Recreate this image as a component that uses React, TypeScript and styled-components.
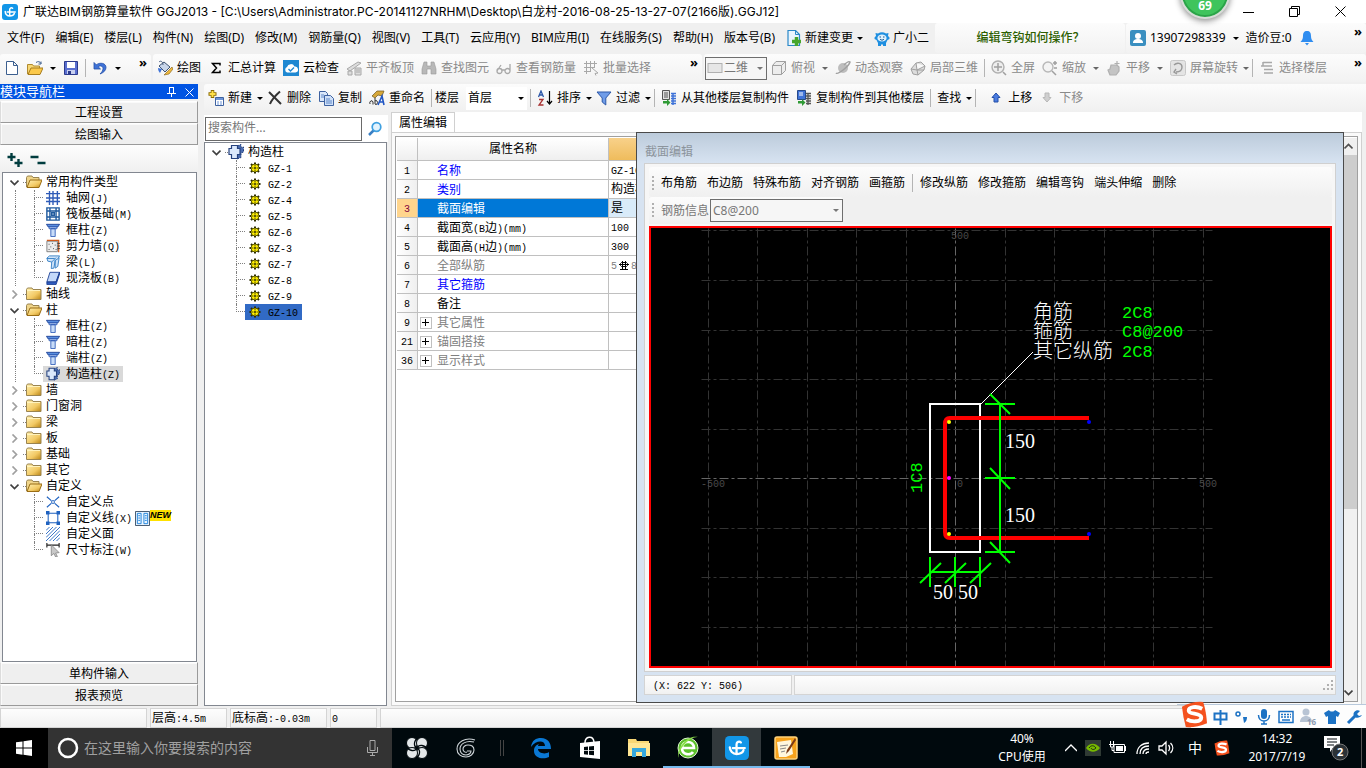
import React from 'react';
import styled, { createGlobalStyle, css } from 'styled-components';

const UI_FONT = `"Noto Sans", "Noto Sans CJK SC", sans-serif`;

const GlobalStyle = createGlobalStyle`
  *, *::before, *::after { box-sizing: border-box; }
  body { margin: 0; background: #f0f0f0; color: #000; font: 12px/16px ${UI_FONT}; }
  button, input, select { font: inherit; color: inherit; border-radius: 0; }
  button { border: 0; padding: 0; margin: 0; background: none; white-space: nowrap; }
  ul { list-style: none; margin: 0; padding: 0; }
  svg { display: block; flex: none; }
`;

/* ---------- icons ---------- */

const art: Record<string, React.ReactNode> = {
  app: (
    <>
      <rect width="16" height="16" rx="3" fill="#1296e8" />
      <path d="M10.600 4.300A1.700 1.700 0 0 0 7.700 5.500V12M5.200 8h8M3.200 7.500A4.500 4.500 0 0 0 7.700 12Q11.500 12 12.300 9.600" fill="none" stroke="#fff" strokeWidth="1.500" strokeLinecap="round" />
    </>
  ),
  file: <path d="M2.500 1.500h7l4 4v9h-11zM9.500 1.500v4h4" fill="#fff" stroke="#3c5f8f" />,
  folderOpenBar: (
    <>
      <path d="M.5 14V4.500h5l1 1.500h6v2" fill="#f7d774" stroke="#b08a2e" />
      <path d="M1 14.500 4 8h12l-3 6.500z" fill="#fbc94b" stroke="#a67c1e" />
      <path d="M9 2.500c2-1.500 4-1 5 1m0-2v2.500h-2.500" fill="none" stroke="#3c5f8f" />
    </>
  ),
  save: (
    <>
      <path d="M1.500 1.500h13v13h-13z" fill="#5a6fd0" stroke="#2c3a8c" />
      <path d="M4 2h8v6H4z" fill="#fff" />
      <path d="M4 10h8v4H4z" fill="#c8d0f0" />
      <path d="M5 11h3v3H5z" fill="#2c3a8c" />
    </>
  ),
  undo: <path d="M2 2.500v6.500h6.500L6.200 6.800C8 5 11 6 11 8.500c0 2-1 3.500-3 5.500 4-1.500 6-4 6-6.500C14 3 8 2 4.300 4.800z" fill="#3f73d8" stroke="#2450a8" strokeWidth=".8" />,
  paint: (
    <>
      <path d="m2 6 5-4 6 5-5 5z" fill="#c9d6ea" stroke="#3f5472" />
      <path d="M2 2c2-2 4 0 4 3" fill="none" stroke="#4a5f80" />
      <path d="M1 8c0 2 1 4 2 5l2-4z" fill="#3f73d8" />
      <path d="m15 7-5 5-3 3 5-1 4-5z" fill="#efb93d" stroke="#7d5a12" strokeWidth=".6" />
    </>
  ),
  sigma: <path d="M12 5.500V3.500H4.500l4 4.500-4 4.500H12v-2" fill="none" stroke="#000" strokeWidth="1.500" />,
  cloud: (
    <>
      <rect width="16" height="16" fill="#1e88d2" />
      <path d="M4 12.500a3 3 0 0 1 0-5.500 4 4 0 0 1 7.500-.5 3 3 0 0 1 1 6z" fill="#fff" />
      <path d="m5.500 9 2 2 3.500-3.500" fill="none" stroke="#1e88d2" strokeWidth="1.400" />
    </>
  ),
  align: <path d="M1 9 12 2l3 1L4 11zM2 11h4v4H2zM9 8h6v7H9zM10 10h4M10 12h4" fill="#ddd" stroke="#a8a8a8" />,
  binoc: <path d="M3 2h3v4h4V2h3l2 7v5h-5V9H6v5H1V9z" fill="#b8b8b8" stroke="#999" strokeWidth=".6" />,
  glasses: <path d="M1 11a2.500 2.500 0 1 0 5 0 2.500 2.500 0 1 0-5 0m0 0 4-6m4 6a2.500 2.500 0 1 0 5 0 2.500 2.500 0 1 0-5 0M6 10h3m5 1V4" fill="none" stroke="#a8a8a8" strokeWidth="1.300" />,
  batch: <path d="M1 3.500h13M1 7.500h10M1 11.500h7M3.500 1v13M7.500 1v11M11.500 1v7M9 8l6 5-3 .5 1 2" fill="none" stroke="#a8a8a8" />,
  plane2d: <rect x="1" y="3.500" width="14" height="9" fill="#e6e6e6" stroke="#b0b0b0" />,
  cube: <path d="M1.500 5.500 5 1.500h9.500v9l-4 4h-9zM1.500 5.500h9v9M10.500 5.500l4-4" fill="#ededed" stroke="#a0a0a0" />,
  orbit: (
    <>
      <circle cx="8" cy="8" r="5" fill="#bdbdbd" />
      <path d="M1 13C3 15 14 6 15 2c-1-1-4 1-6 3" fill="none" stroke="#a0a0a0" strokeWidth="1.500" />
    </>
  ),
  local3d: <path d="m1 9 5-6 5-1 4 4-1 4-6 5-5-1zM1 9l6 1 7 0M7 10l1 5M6 3l1 7 8-4" fill="#ddd" stroke="#a0a0a0" />,
  full: (
    <>
      <circle cx="7" cy="7" r="6" fill="#eee" stroke="#b0b0b0" strokeWidth="1.400" />
      <path d="M7 3v8M3 7h8M12 12l3 3" stroke="#a0a0a0" strokeWidth="1.500" />
    </>
  ),
  zoom: (
    <>
      <circle cx="6" cy="7" r="5" fill="#f4f4f4" stroke="#b8b8b8" strokeWidth="1.400" />
      <path d="m10 11 4 4M11 3h4M13 1v4M12 8h3" stroke="#a0a0a0" strokeWidth="1.500" />
    </>
  ),
  pan: <path d="M4 15 2 10l2-1 1-4h6l2 2v4l-3 4zM11 1v5M8.500 3.500h5" fill="#c4c4c4" stroke="#b0b0b0" strokeWidth="1.200" />,
  rotate: (
    <>
      <rect x=".5" y=".5" width="15" height="15" rx="2" fill="#e4e4e4" stroke="#c8c8c8" />
      <path d="M4 5c3-3 8-2 8 2s-3 5-6 5m0-3-2 3 3 2" fill="none" stroke="#999" strokeWidth="1.400" />
    </>
  ),
  floors: <path d="M4 2.500h9M2 6h11M5 9.500h9M5 13h9M4 2v4" fill="none" stroke="#a8a8a8" strokeWidth="1.500" />,
  create: (
    <>
      <path d="M4.500 0v8M.5 4h8" stroke="#8a6a00" strokeWidth="3.500" />
      <path d="M4.500 1v6M1.500 4h6" stroke="#ffe04a" strokeWidth="2" />
      <path d="M7.500 7.500h8v8h-8z" fill="#fff" stroke="#3f62a0" />
      <path d="M8 8h7v2H8z" fill="#6d95d8" />
      <path d="M9 12h2m1 0h2m-5 2h2m1 0h2" stroke="#6d95d8" />
    </>
  ),
  cross: <path d="m2 2 12 12M13 1.500C9 5 5 9 3 14" fill="none" stroke="#333" strokeWidth="2" />,
  copy: (
    <>
      <path d="M1.500 1.500h6l2 2v8h-8z" fill="#dbe8fa" stroke="#3f62a0" />
      <path d="M6.500 5.500h6l3 3v7h-9z" fill="#cfe0f8" stroke="#3f62a0" />
      <path d="M3 5h3M3 7h3M8 9h4M8 11h6M8 13h6" stroke="#5f88c8" />
    </>
  ),
  rename: (
    <>
      <path d="m3 6 5-5h7l-2 5-4-1-3 3z" fill="#d7a83a" stroke="#6a5420" strokeWidth=".7" />
      <path d="M1 14a1.500 2 0 1 1 3-2v2.500M6 8v6a1.500 2 0 1 0 0-3" fill="none" stroke="#333" />
      <path d="m9 15 4-9 2 9M10.500 12H14" fill="none" stroke="#2257c4" strokeWidth="1.600" />
    </>
  ),
  sort: (
    <>
      <path d="m1.500 7 2.500-6 2.500 6M2.500 5h3" fill="none" stroke="#2b57a8" strokeWidth="1.300" />
      <path d="M2 9.500h4L2 15h4.500" fill="none" stroke="#a83232" strokeWidth="1.300" />
      <path d="M12.500 1v13M10 11l2.500 3 2.500-3" fill="none" stroke="#000" strokeWidth="1.200" />
    </>
  ),
  filter: <path d="M1 2h14L9.800 8v7L6.200 12V8z" fill="#6f9ce8" stroke="#2b57a8" />,
  fromFloor: (
    <>
      <path d="M1.500.5h7v9h-7z" fill="#e0e0e0" stroke="#555" />
      <path d="M3 3h4M3 5h4M3 7h4" stroke="#555" />
      <path d="M12 3v12M10 3.500h5M10 6h5M10 8.500h5M10 11h5M10 13.500h5" stroke="#3f73d8" strokeWidth="1.500" />
      <path d="M2 11h4V9l3.500 3.500L6 16v-2.500H2z" fill="#2f9a35" />
    </>
  ),
  toFloor: (
    <>
      <path d="M1.500.5h8v9h-8z" fill="#3f73d8" stroke="#27498a" />
      <path d="M3 3h4M3 5h4" stroke="#fff" />
      <path d="M12 3v12M10 3.500h5M10 6h5M10 8.500h5M10 11h5M10 13.500h5" stroke="#555" strokeWidth="1.300" />
      <path d="M2 11h4V9l3.500 3.500L6 16v-2.500H2z" fill="#2f9a35" />
    </>
  ),
  up: <path d="m8 3 4 4.500H10V12H6V7.500H4z" fill="#4a7be0" stroke="#2450a8" />,
  down: <path d="m8 12 4-4.500H10V3H6v4.500H4z" fill="#cfcfcf" stroke="#b8b8b8" />,
  change: (
    <>
      <path d="M2 .5h7.500l4 4v11H2z" fill="#e8f4fd" stroke="#2a88c8" strokeWidth="1.200" />
      <path d="M9.500.5v4h4" fill="none" stroke="#2a88c8" />
      <path d="M10.500 7v9M6 11.500h9" stroke="#46a62c" strokeWidth="3.500" />
    </>
  ),
  robot: (
    <>
      <path d="M1.500 3 4 3.500a8 8 0 0 1 8 0L14.500 3 14 6q2 1 1.500 3l-2 1-1.500 3v3H9v-1.500H7V16H4v-3L2.500 10l-2-1Q0 7 2 6z" fill="#1f8fe0" />
      <ellipse cx="8" cy="8" rx="4.600" ry="3.600" fill="#dff0fc" />
      <path d="M5.500 7h1.500M9 7h1.500M6 9c1 1.500 3 1.500 4 0" stroke="#125a96" fill="none" />
    </>
  ),
  user: (
    <>
      <rect width="16" height="16" rx="2" fill="#3a8fc0" />
      <circle cx="8" cy="6" r="3" fill="#fff" />
      <path d="M3 13c0-3 2-4 5-4s5 1 5 4z" fill="#fff" />
    </>
  ),
  bell: <path d="M8 1c3 0 4 2 4 5 0 3 1 4 2.500 6h-13C3 10 4 9 4 6c0-3 1-5 4-5M6 13h4l-2 2.500z" fill="#2f8df0" />,
  lens: (
    <>
      <path d="m2 14 5-5" stroke="#3a7fc4" strokeWidth="2.500" />
      <circle cx="9.500" cy="6" r="4.300" fill="#e3f3fd" stroke="#3fa0e0" strokeWidth="1.700" />
    </>
  ),
  expandAll: <path d="M4.500 1v8M.5 5h8M11.500 7v8M7.500 11h8" stroke="#003c3e" strokeWidth="2.400" />,
  collapseAll: <path d="M.5 5h8M7.500 11h8" stroke="#003c3e" strokeWidth="2.400" />,
  folder: (
    <>
      <path d="M.5 3.500 1.500 2h4.500l1 1.500h8v10H.5z" fill="url(#gold)" stroke="#9a8450" />
      <path d="M1 4.500h13" stroke="#fff3bd" />
    </>
  ),
  folderOpen: (
    <>
      <path d="M.5 13V3.500L1.500 2H6l1 1.500h6V6" fill="#f0d58a" stroke="#9a8450" />
      <path d="M1 13.500 4 6h12l-3 7.500z" fill="url(#gold)" stroke="#9a6d14" />
    </>
  ),
  grid: <path d="M4 0v16M8 0v16M13 0v16M0 3h16M0 8h16M0 12h16" stroke="#2f5cb8" strokeWidth="1.600" />,
  raft: <path d="M1 1h14v14H1zM4.500 1v14M11.500 1v14M1 4.500h14M1 11.500h14M6.500 6.500h3v3h-3z" fill="#fff" stroke="#1f5a9e" strokeWidth="1.600" />,
  column: (
    <>
      <path d="M.5 1.500h15l-2 3h-11z" fill="#5a8fe0" stroke="#1c3f94" />
      <path d="M3.500 4.500h9v2h-9zM5.500 6.500h5v9h-5z" fill="#c8dcf8" stroke="#2f5cb8" />
    </>
  ),
  wall: (
    <>
      <path d="M1 2.500h12v12H1z" fill="#ececec" stroke="#777" />
      <path d="M1 1.500h13.500V15" fill="none" stroke="#d05a1c" strokeWidth="1.400" />
      <path d="M3 6h1M7 5h1M10 7h1M5 9h1M8 11h1M3 12h1M11 12h1M13 5h3M13 8h3M13 11h3" stroke="#333" />
    </>
  ),
  beam: <path d="M1 3.500 4 1h11.500l-2 3.500-3 1.500L9 15 6 15.500 6.500 8 2 7zM6.500 8l5-5M10.500 6v9l3-2 1.500-10M1 4h9" fill="#cfe3f8" stroke="#2f7cc4" />,
  slab: (
    <>
      <path d="M1 12.500 4.500 1.500h11l-4 11z" fill="#c4d9fa" stroke="#1c3f94" />
      <path d="M1 12.500v3h10.500l4-12v-2l-4 11z" fill="#2f5cc0" stroke="#1c3f94" />
    </>
  ),
  gear: (
    <>
      <path d="M9 2l4-1.500v3L15.500 3v5L13 9v4.500L9 15z" fill="#4a6cb0" stroke="#26427e" strokeDasharray="2 1" />
      <path d="M3.500 1.500h6v3h2.500v6H9.500v4h-6v-4H1v-6h2.500z" fill="#dbe8fb" stroke="#26427e" strokeWidth="1.200" />
    </>
  ),
  point: (
    <>
      <path d="m1 2 5 4.500M15 2l-5 4.500M1 14l5-4.500M15 14l-5-4.500" stroke="#1f62c0" strokeWidth="1.300" />
      <path d="M6.500 6.500h3v3h-3z" fill="#fff" stroke="#1f62c0" />
    </>
  ),
  line: (
    <>
      <path d="M2.500 2.500h11v11h-11z" fill="#fff" stroke="#1f62c0" strokeWidth="1.200" />
      <path d="M0 0h4v4H0zM12 0h4v4h-4zM0 12h4v4H0zM12 12h4v4h-4z" fill="#1f62c0" />
    </>
  ),
  hatch: <path d="M0 4 4 0M0 8l8-8M0 12 12 0M0 16 16 0M4 16 16 4M8 16l8-8M12 16l4-4" stroke="#1f62c0" />,
  dims: (
    <>
      <path d="M1 0v5M15 0v5M1 2.500h14" stroke="#222" strokeWidth="1.300" />
      <path d="m6 2 9 9-4 .5 2 4-2 .5-2-4-3 2.500z" fill="#c8c8c8" stroke="#777" strokeWidth=".8" />
    </>
  ),
  book: (
    <>
      <path d="M.5.5h15v15H.5z" fill="#eaf5ff" stroke="#3a4f68" />
      <path d="M2.500 2.500h4v11h-4zM9.500 2.500h4v11h-4zM3.500 5h2M3.500 7.500h2M3.500 10h2M10.500 5h2M10.500 7.500h2M10.500 10h2" fill="none" stroke="#1f83dc" />
    </>
  ),
  cog: (
    <>
      <path d="M6 .5v11M.5 6h11M2 2l8 8M10 2l-8 8" stroke="#2a2a00" strokeWidth="2" />
      <circle cx="6" cy="6" r="4" fill="#ffee00" stroke="#3a3a00" strokeWidth=".8" />
      <path d="M6 3v1.500M6 7.500V9M3 6h1.500M7.500 6H9M5.500 5.500h1v1h-1z" stroke="#3a3a00" strokeWidth=".9" />
    </>
  ),
};

type IconProps = { name: string; size?: number };
const Icon = ({ name, size = 16 }: IconProps) => (
  <svg width={size} height={size} viewBox={name === 'cog' ? '0 0 12 12' : '0 0 16 16'} aria-hidden="true">
    {art[name]}
  </svg>
);

const Half = styled.span`
  font-family: "Liberation Mono", monospace;
  font-size: 10px;
  line-height: 10px;
`;

/* Full-width characters take 12px each, ASCII runs 6px each. */
const Song = ({ children }: { children: string }) => (
  <span>
    {children.split(/([\x20-\x7e]+)/).map((part, i) => (i % 2 ? <Half key={i}>{part}</Half> : part))}
  </span>
);

const Caret = styled.span<{ $w?: number; $dim?: boolean }>`
  flex: none;
  display: flex;
  justify-content: center;
  width: ${(p) => p.$w ?? 12}px;
  color: ${(p) => (p.$dim ? '#666' : 'inherit')};
  &::after {
    content: '';
    border: 3px solid transparent;
    border-top-color: currentColor;
    border-bottom: 0;
  }
`;

/* ---------- title bar and menus ---------- */

const Page = styled.div`
  position: relative;
  min-height: 100vh;
  display: flex;
  flex-direction: column;
  overflow: hidden;
`;

const TitleBar = styled.header`
  height: 23px;
  display: flex;
  align-items: center;
  padding: 0 3px 0 2px;
  gap: 5px;
  background: #fff;
  overflow: hidden;
`;

const Title = styled.span`
  flex: 1;
  min-width: 0;
  white-space: nowrap;
  font-family: Inter, "Noto Sans CJK SC", sans-serif;
`;

const WindowButtons = styled.div`
  display: flex;
`;

const WindowButton = styled.button`
  width: 46px;
  height: 22px;
  display: flex;
  align-items: center;
  justify-content: center;
`;

const Ball = styled.div`
  position: absolute;
  top: -31px;
  right: 136px;
  width: 50px;
  height: 50px;
  padding-top: 27px;
  border: 2px solid #d8dcd8;
  border-radius: 50%;
  background: #3fc45c;
  box-shadow: inset 0 0 0 2px #2ba348, 0 2px 6px rgba(0, 0, 0, 0.45);
  color: #fff;
  font-weight: 700;
  text-align: center;
`;

const MenuBar = styled.nav`
  height: 30px;
  display: flex;
  align-items: stretch;
  gap: 1px;
  padding-left: 2px;
`;

const MenuItem = styled.button`
  padding: 0 5px;
  display: flex;
  align-items: center;
  gap: 3px;
`;

const Strip = styled.div<{ $grow?: number; $basis?: string }>`
  flex: ${(p) => p.$grow ?? 0} 0 ${(p) => p.$basis ?? 'auto'};
  display: flex;
  align-items: center;
  gap: 1px;
  padding-left: 1px;
  border-radius: 3px;
  background: linear-gradient(#fcfcfc, #f2f2f2);
`;

const Hint = styled.a`
  flex: 1;
  text-align: center;
  color: #2d5f00;
  font-weight: 500;
  text-decoration: none;
`;

const More = styled.button`
  align-self: flex-start;
  margin-left: auto;
  padding: 1px 4px;
  font: 700 13px/14px ${UI_FONT};
`;

const ToolRow = styled.div`
  height: 31px;
  display: flex;
  align-items: stretch;
  gap: 2px;
  padding: 1px 0 2px;
`;

const ToolButton = styled.button`
  display: flex;
  align-items: center;
  gap: 4px;
  height: 22px;
  padding: 0 3px;
  &:disabled { color: #8a8a8a; }
`;

const Divider = styled.span<{ $blank?: boolean }>`
  flex: none;
  width: 1px;
  height: 18px;
  margin: 0 2px;
  background: ${(p) => (p.$blank ? 'transparent' : '#b4b4b4')};
`;

type ToolProps = { icon?: string; label?: string; off?: boolean; arrow?: number; name?: string };
const Tool = ({ icon, label, off, arrow, name }: ToolProps) => (
  <>
    <ToolButton disabled={off} aria-label={name}>
      {icon && <Icon name={icon} />}
      {label}
    </ToolButton>
    {arrow && <Caret $w={arrow} $dim={off} />}
  </>
);

const SelectBox = styled.label<{ $w: number; $framed?: boolean; $dim?: boolean }>`
  flex: none;
  display: flex;
  align-items: center;
  width: ${(p) => p.$w}px;
  height: 23px;
  background: ${(p) => (p.$framed ? '#f6f6f6' : '#fff')};
  color: ${(p) => (p.$dim ? '#777' : '#000')};
  border: ${(p) => (p.$framed ? '1px solid #6e6e6e' : '0')};
  padding-left: 1px;
  select {
    appearance: none;
    flex: 1;
    min-width: 0;
    border: 0;
    padding: 0 1px;
    background: none;
  }
`;

/* ---------- left navigator ---------- */

const Work = styled.div`
  flex: 1;
  display: flex;
  gap: 6px;
  padding-bottom: 2px;
`;

const Navigator = styled.aside`
  flex: 0 0 198px;
  display: flex;
  flex-direction: column;
`;

const NavHead = styled.div`
  height: 15px;
  display: flex;
  align-items: center;
  justify-content: space-between;
  background: #0054e3;
  color: #fff;
  font-size: 13px;
  line-height: 15px;
`;

const NavHeadTools = styled.span`
  display: flex;
  gap: 9px;
  padding-right: 4px;
`;

const NavStack = styled.div`
  flex: 1;
  display: flex;
  flex-direction: column;
  padding: 2px 0 0;
`;

const NavButton = styled.button`
  height: 22px;
  padding-top: 1px;
  border: 1px solid #9a9a9a;
  border-top-color: #fff;
  border-left-color: #dcdcdc;
  background: #efefef;
  box-shadow: inset 1px 1px 0 #fafafa;
`;

const NavTools = styled.div`
  display: flex;
  align-items: center;
  gap: 7px;
  height: 27px;
  padding: 3px 0 0 7px;
  background: linear-gradient(#fdfdfd, #f0f0f0);
`;

const Tree = styled.ul<{ $inset?: boolean }>`
  flex: 1;
  margin-left: ${(p) => (p.$inset ? 2 : 0)}px;
  margin-right: 1px;
  padding-top: 1px;
  border: 1px solid #828790;
  background: #fff;
`;

const Row = styled.div`
  height: 16px;
  display: flex;
  align-items: center;
`;

const Twist = styled.button`
  width: 20px;
  height: 16px;
  padding-left: 2px;
  display: flex;
  align-items: center;
  justify-content: center;
`;

const Stub = styled.span`
  width: 3px;
  border-top: 1px dotted #808080;
`;

const Trunk = styled.span<{ $line?: boolean; $w: number }>`
  width: ${(p) => p.$w}px;
  height: 16px;
  margin-left: 12px;
  border-left: 1px dotted ${(p) => (p.$line ? '#808080' : 'transparent')};
`;

const Branch = styled.span<{ $last?: boolean }>`
  width: 9px;
  &::before, &::after {
    content: '';
    display: block;
    height: 8px;
    border-left: 1px dotted #808080;
  }
  &::before { border-bottom: 1px dotted #808080; }
  ${(p) => p.$last && css`&::after { border-left-color: transparent; }`}
`;

const RootLabel = styled.button`
  display: flex;
  align-items: center;
  gap: 4px;
  height: 16px;
`;

const Leaf = styled.button<{ $bg?: string; $gap: number; $pad: number }>`
  display: flex;
  align-items: center;
  gap: ${(p) => p.$gap}px;
  height: 16px;
  padding: 0 ${(p) => p.$pad}px;
  background: ${(p) => p.$bg ?? 'none'};
`;

const NewTag = styled.em`
  align-self: flex-start;
  background: #ffe100;
  font: italic 700 9px/11px "Liberation Sans", sans-serif;
`;

const Chevron = ({ open }: { open?: boolean }) => (
  <svg width="9" height="9" viewBox="0 0 9 9" aria-hidden="true">
    <path d={open ? 'M.5 2.500l4 4 4-4' : 'M2.500.5l4 4-4 4'} fill="none" stroke={open ? '#404040' : '#a0a0a0'} strokeWidth="1.700" />
  </svg>
);

type Branches = { label: string; open?: boolean; items?: [string, string][] };
const modules: Branches[] = [
  {
    label: '常用构件类型',
    open: true,
    items: [['grid', '轴网(J)'], ['raft', '筏板基础(M)'], ['column', '框柱(Z)'], ['wall', '剪力墙(Q)'], ['beam', '梁(L)'], ['slab', '现浇板(B)']],
  },
  { label: '轴线' },
  { label: '柱', open: true, items: [['column', '框柱(Z)'], ['column', '暗柱(Z)'], ['column', '端柱(Z)'], ['gear', '构造柱(Z)']] },
  { label: '墙' },
  { label: '门窗洞' },
  { label: '梁' },
  { label: '板' },
  { label: '基础' },
  { label: '其它' },
  { label: '自定义', open: true, items: [['point', '自定义点'], ['line', '自定义线(X)'], ['hatch', '自定义面'], ['dims', '尺寸标注(W)']] },
];

const ModuleTree = () => (
  <Tree $inset>
    {modules.map((m, i) => (
      <li key={m.label}>
        <Row>
          <Twist aria-label={m.open ? '折叠' : '展开'}><Chevron open={m.open} /></Twist>
          <Stub />
          <RootLabel>
            <Icon name={m.open ? 'folderOpen' : 'folder'} />
            {m.label}
          </RootLabel>
        </Row>
        {m.items && (
          <ul>
            {m.items.map(([icon, label], j) => (
              <li key={label}>
                <Row>
                  <Trunk $w={19} $line={i < modules.length - 1} />
                  <Branch $last={j === m.items!.length - 1} />
                  <Leaf $gap={6} $pad={3} $bg={icon === 'gear' ? '#d9d9d9' : undefined}>
                    <Icon name={icon} size={14} />
                    <Song>{label}</Song>
                  </Leaf>
                  {icon === 'line' && (
                    <>
                      <Icon name="book" size={15} />
                      <NewTag>NEW</NewTag>
                    </>
                  )}
                </Row>
              </li>
            ))}
          </ul>
        )}
      </li>
    ))}
  </Tree>
);

/* ---------- component finder ---------- */

const Main = styled.div`
  flex: 1;
  min-width: 0;
  display: flex;
  flex-direction: column;
`;

const ComponentBar = styled.div`
  height: 28px;
  display: flex;
  align-items: center;
  gap: 1px;
  padding-left: 1px;
  overflow: hidden;
  border-radius: 3px 0 0 3px;
  background: linear-gradient(#fcfcfc, #f0f0f0);
`;

const Panels = styled.div`
  flex: 1;
  display: flex;
  gap: 3px;
`;

const Finder = styled.section`
  flex: 0 0 184px;
  display: flex;
  flex-direction: column;
`;

const SearchRow = styled.div`
  height: 30px;
  display: flex;
  padding: 2px 0 1px 1px;
  background: #fff;
  border-top: 3px solid #f0f0f0;
`;

const SearchInput = styled.input`
  width: 157px;
  height: 24px;
  padding: 0 2px 3px;
  border: 1px solid #6a6a6a;
  outline: 0;
  &::placeholder { color: #777; opacity: 1; }
`;

const SearchButton = styled.button`
  flex: 1;
  display: flex;
  align-items: center;
  justify-content: center;
`;

const components = ['GZ-1', 'GZ-2', 'GZ-4', 'GZ-5', 'GZ-6', 'GZ-3', 'GZ-7', 'GZ-8', 'GZ-9', 'GZ-10'];

/* ---------- property editor ---------- */

const Editor = styled.section`
  position: relative;
  flex: 1;
  min-width: 0;
  display: flex;
  flex-direction: column;
  margin-right: 4px;
`;

const Tabs = styled.div`
  height: 20px;
  display: flex;
  background: #fff;
`;

const Tab = styled.button`
  height: 21px;
  padding: 0 7px;
  background: #fff;
  border: 1px solid #d0d0d0;
  border-bottom: 0;
`;

const Pane = styled.div`
  flex: 1;
  display: flex;
  padding: 3px;
  border: 1px solid #d0d0d0;
  background: #fafafa;
`;

const Sheet = styled.div`
  flex: 1;
  display: flex;
  border: 1px solid #a0a0a0;
  background: #fff;
  padding: 1px 0 0 1px;
`;

const SheetBody = styled.div`
  flex: 1;
`;

const PropTable = styled.table`
  width: 100%;
  table-layout: fixed;
  border-collapse: separate;
  border-spacing: 0;
  th, td {
    height: 19px;
    padding: 0;
    border-right: 1px solid #c0c0c0;
    border-bottom: 1px solid #c0c0c0;
    font-weight: 400;
    line-height: 16px;
    white-space: nowrap;
  }
  thead th { height: 23px; background: linear-gradient(#fff, #efefef); }
  thead th:last-child { background: linear-gradient(#f8d18a, #efbc5c); }
`;

const IndexCell = styled.th<{ $on?: boolean }>`
  background: ${(p) => (p.$on ? '#ffd58d' : 'linear-gradient(90deg, #fff, #efefef)')};
  color: ${(p) => (p.$on ? '#800040' : '#000')};
`;

const NameCell = styled.td<{ $on?: boolean; $color: string }>`
  color: ${(p) => (p.$on ? '#fff' : p.$color)};
  background: ${(p) => (p.$on ? '#0078d7' : '#fff')};
`;

const NameInner = styled.div`
  display: flex;
  align-items: center;
  gap: 5px;
  height: 18px;
  padding: 2px 0 0 2px;
`;

const PlusBox = styled.button<{ $show?: boolean }>`
  visibility: ${(p) => (p.$show ? 'visible' : 'hidden')};
  width: 12px;
  height: 12px;
  border: 1px solid #c0c0c0;
  color: #000;
`;

const ValueCell = styled.td<{ $on?: boolean; $dim?: boolean }>`
  background: ${(p) => (p.$on ? '#d9ebf9' : '#fff')};
  color: ${(p) => (p.$dim ? '#808080' : '#000')};
`;

const ValueInner = styled.div`
  display: flex;
  align-items: center;
  gap: 2px;
  padding-left: 2px;
`;

const Plus = () => (
  <svg width="10" height="10" viewBox="0 0 10 10" aria-hidden="true"><path d="M4.500 1v7M1 4.500h7" stroke="currentColor" /></svg>
);

const RebarMark = () => (
  <svg width="10" height="11" viewBox="0 0 10 11" aria-hidden="true">
    <path d="M2.500 2.500h5l1 1v2l-1 1h-5l-1-1v-2zM3.500 1v9M6.500 1v9M0 4.500h10M1 9.500h8" fill="none" stroke="#000" />
  </svg>
);

type Prop = { n: string; name: string; value?: string; tone?: string; on?: boolean; group?: boolean };
const BLUE = '#0000ff';
const GREY = '#808080';
const props: Prop[] = [
  { n: '1', name: '名称', value: 'GZ-10', tone: BLUE },
  { n: '2', name: '类别', value: '构造柱', tone: BLUE },
  { n: '3', name: '截面编辑', value: '是', on: true },
  { n: '4', name: '截面宽(B边)(mm)', value: '100' },
  { n: '5', name: '截面高(H边)(mm)', value: '300' },
  { n: '6', name: '全部纵筋', tone: GREY },
  { n: '7', name: '其它箍筋', tone: BLUE },
  { n: '8', name: '备注' },
  { n: '9', name: '其它属性', tone: GREY, group: true },
  { n: '21', name: '锚固搭接', tone: GREY, group: true },
  { n: '36', name: '显示样式', tone: GREY, group: true },
];

const ScrollBar = styled.div`
  flex: none;
  width: 17px;
  display: flex;
  flex-direction: column;
  background: #f0f0f0;
`;

const ScrollArrow = styled.button`
  height: 17px;
  display: flex;
  align-items: center;
  justify-content: center;
`;

const ScrollTrack = styled.div`
  flex: 1;
  &::before {
    content: '';
    display: block;
    height: 67%;
    background: #cdcdcd;
  }
`;

/* ---------- section editor window ---------- */

const SectionWindow = styled.section`
  position: absolute;
  left: 245px;
  right: 18px;
  top: 20px;
  bottom: 3px;
  display: flex;
  flex-direction: column;
  padding: 0 7px 7px;
  border: 1px solid #4a4a4a;
  background: linear-gradient(#bccbdb, #d7e3f1 30px);
`;

const SectionTitle = styled.h2`
  margin: 0;
  height: 30px;
  padding: 3px 0 0 1px;
  font: 400 12px/32px ${UI_FONT};
  color: #8c949c;
`;

const Client = styled.div`
  flex: 1;
  display: flex;
  flex-direction: column;
  padding: 3px 3px 3px 4px;
  border: 1px solid #d0d0d0;
  background: #f6f6f6;
`;

const SectionBar = styled.div<{ $h: number; $fit?: boolean }>`
  height: ${(p) => p.$h}px;
  width: ${(p) => (p.$fit ? 'fit-content' : 'auto')};
  display: flex;
  align-items: center;
  padding: ${(p) => (p.$fit ? 0 : 2)}px 0 0 3px;
  border-radius: 3px;
  background: linear-gradient(#fcfcfc, #f0f0f0);
`;

const BarBack = styled.div`
  background: #f0f0f0;
`;

const Grip = styled.span`
  width: 2px;
  height: 15px;
  margin-right: 2px;
  background: repeating-linear-gradient(#b0b0b0 0 2px, transparent 2px 4px);
`;

const SectionButton = styled.button`
  padding: 0 5px;
`;

const FieldName = styled.label`
  padding: 0 1px 0 5px;
  color: #777;
`;

const Canvas = styled.div`
  flex: 1;
  margin-top: 2px;
  border: 2px solid #f00;
  background: #000;
  display: flex;
  overflow: hidden;
  svg { flex: 1; }
`;

const SectionStatus = styled.div`
  display: flex;
  gap: 2px;
  margin-top: 3px;
  background: #f0f0f0;
`;

const StatusCell = styled.div<{ $w?: number; $end?: boolean }>`
  flex: ${(p) => (p.$w ? `0 0 ${p.$w}px` : '1')};
  height: 20px;
  display: flex;
  align-items: center;
  justify-content: ${(p) => (p.$end ? 'flex-end' : 'flex-start')};
  border: 1px solid #d4d4d4;
  background: linear-gradient(#fdfdfd, #f1f1f1);
  overflow: hidden;
`;

const Indent = styled.span`
  padding-left: 8px;
  white-space: pre;
`;

const columnsX = [57, 106, 156, 205, 255, 304, 354, 403, 453, 502, 552];
const rowsY = [2, 52, 102, 151, 201, 250, 300, 349, 399];

const SectionDrawing = () => (
  <svg role="img" aria-label="构造柱截面" fontFamily='"Liberation Mono", "Noto Sans CJK SC", monospace'>
    <g transform="translate(.5 .5)" stroke="#333" strokeDasharray="9 3 3 3">
      {columnsX.map((x) => <line key={x} x1={x} x2={x} y1="0" y2="438" stroke={x === 304 ? '#666' : undefined} />)}
      {rowsY.map((y) => <line key={y} x1="50" x2="561" y1={y} y2={y} stroke={y === 250 ? '#666' : undefined} />)}
    </g>
    <g fill="#4a4a4a" fontSize="10">
      <text x="300" y="11">500</text>
      <text x="50" y="259">-500</text>
      <text x="306" y="259">0</text>
      <text x="548" y="259">500</text>
    </g>
    <path d="M330 176 382 124" stroke="#fff" />
    <rect x="279" y="176" width="50" height="148" fill="none" stroke="#fff" strokeWidth="2" />
    <path d="M438 190H299q-5 0-5 6v108q0 6 5 6h139" fill="none" stroke="#f00" strokeWidth="4" />
    <g stroke="#0f0" strokeWidth="2">
      <path d="M349 176v148M334 176h30M334 250h30M334 324h30M339 166l20 20M339 240l20 21M339 314l20 21" />
      <path d="M279 344h50M279 329v30M304 329v30M329 329v30M269 355l21-20M294 355l21-20M319 355l21-20" />
    </g>
    <circle cx="298" cy="194" r="2" fill="#ff0" />
    <circle cx="298" cy="306" r="2" fill="#ff0" />
    <circle cx="298" cy="250" r="2" fill="#f0f" />
    <circle cx="438" cy="194" r="2" fill="#00f" />
    <circle cx="438" cy="306" r="2" fill="#00f" />
    <g fill="#fff" fontFamily='"Liberation Serif", serif' fontSize="20">
      <text x="354" y="220">150</text>
      <text x="354" y="294">150</text>
      <text x="282" y="371">50</text>
      <text x="307" y="371">50</text>
    </g>
    <g fill="#fff" fontSize="20" fontWeight="300">
      <text x="382" y="91">角筋</text>
      <text x="382" y="110">箍筋</text>
      <text x="382" y="130">其它纵筋</text>
    </g>
    <g fill="#0f0" fontSize="17">
      <text x="471" y="90">2C8</text>
      <text x="471" y="109">C8@200</text>
      <text x="471" y="129">2C8</text>
      <text transform="translate(271 265) rotate(-90)">1C8</text>
    </g>
  </svg>
);

/* ---------- status bar, input method bar, taskbar ---------- */

const StatusBar = styled.footer`
  display: flex;
  gap: 3px;
  height: 20px;
`;

const StatusText = styled.span`
  padding-left: 1px;
`;

const ImeBar = styled.div`
  position: absolute;
  right: 0;
  bottom: 40px;
  height: 24px;
  padding: 0 4px 0 36px;
  display: flex;
  align-items: center;
  gap: 6px;
  background: linear-gradient(90deg, transparent 14px, #fdfdfd 14px);
  border-top: 1px solid #b8c9dc;
  color: #1c72c4;
`;

const ImeLogo = styled.span`
  position: absolute;
  left: 4px;
  bottom: 0;
`;

const Taskbar = styled.nav`
  height: 40px;
  display: flex;
  background: #00090d;
  color: #fff;
`;

const Start = styled.button`
  width: 48px;
  display: flex;
  align-items: center;
  justify-content: center;
  background: #000;
`;

const TaskSearch = styled.label`
  width: 344px;
  display: flex;
  align-items: center;
  gap: 5px;
  padding: 0 13px 0 9px;
  background: #333;
  input {
    flex: 1;
    min-width: 0;
    border: 0;
    padding: 0;
    background: none;
    outline: 0;
    font-size: 14px;
    line-height: 20px;
  }
  input::placeholder { color: #a0a0a0; opacity: 1; }
`;

const TaskButton = styled.button<{ $on?: boolean; $run?: boolean }>`
  width: 49px;
  display: flex;
  align-items: center;
  justify-content: center;
  background: ${(p) => (p.$on ? '#32393c' : 'none')};
  box-shadow: ${(p) => (p.$run ? 'inset 0 -2px 0 #76b9ed' : 'none')};
`;

const TaskRule = styled.span`
  width: 4px;
  height: 16px;
  margin: 0 12px 0 10px;
  align-self: center;
  border: solid #444;
  border-width: 0 1px;
`;

const Tray = styled.div`
  margin-left: auto;
  display: flex;
  align-items: center;
  gap: 8px;
`;

const Readout = styled.div<{ $w: number }>`
  width: ${(p) => p.$w}px;
  text-align: center;
  line-height: 18px;
`;

const InputMode = styled.button`
  width: 22px;
  font-size: 14px;
`;

const ShowDesktop = styled.button`
  width: 5px;
  height: 40px;
  margin-left: 4px;
  border-left: 1px solid #555;
`;

const Logo = ({ size }: { size: number }) => (
  <svg width={size} height={size} viewBox="0 0 28 28" aria-hidden="true">
    <path d="M1 6Q12 0 23 1q3 9 4 22-12 5-22 4Q2 16 1 6" fill="#f4511e" />
    <path d="M22 8C16 5 8 6 8 10s13 2 13 7-10 5-15 2" fill="none" stroke="#fff" strokeWidth="4" />
  </svg>
);

const TrayIcon = ({ d, w = 18 }: { d: string; w?: number }) => (
  <svg width={w} height="18" viewBox={`0 0 ${w} 18`} aria-hidden="true">
    <path d={d} fill="none" stroke="currentColor" strokeWidth="1.300" />
  </svg>
);

const menus = ['文件(F)', '编辑(E)', '楼层(L)', '构件(N)', '绘图(D)', '修改(M)', '钢筋量(Q)', '视图(V)', '工具(T)', '云应用(Y)', 'BIM应用(I)', '在线服务(S)', '帮助(H)', '版本号(B)'];

export default function App() {
  return (
    <Page>
      <GlobalStyle />

      <TitleBar>
        <Icon name="app" />
        <Title>广联达BIM钢筋算量软件 GGJ2013 - [C:\Users\Administrator.PC-20141127NRHM\Desktop\白龙村-2016-08-25-13-27-07(2166版).GGJ12]</Title>
        <WindowButtons>
          <WindowButton aria-label="最小化"><svg width="11" height="11"><path d="M0 6.500h11" stroke="#000" /></svg></WindowButton>
          <WindowButton aria-label="还原"><svg width="11" height="11"><path d="M.5 2.500h8v8h-8zM2.500 2.500v-2h8v8h-2" fill="none" stroke="#000" /></svg></WindowButton>
          <WindowButton aria-label="关闭"><svg width="11" height="11"><path d="m.5.5 10 10m0-10-10 10" stroke="#000" /></svg></WindowButton>
        </WindowButtons>
      </TitleBar>

      <MenuBar>
        {menus.map((m) => <MenuItem key={m}>{m}</MenuItem>)}
        <MenuItem><Icon name="change" />新建变更<Caret $w={7} /></MenuItem>
        <MenuItem><Icon name="robot" />广小二</MenuItem>
        <Strip $grow={1}><Hint href="#help">编辑弯钩如何操作？</Hint></Strip>
        <Strip $basis="240px">
          <Tool icon="user" label="13907298339" arrow={12} />
          <ToolButton>造价豆:0</ToolButton>
          <Tool icon="bell" name="消息" />
          <More aria-label="更多">»</More>
        </Strip>
      </MenuBar>

      <ToolRow>
        <Strip $basis="151px">
          <Tool icon="file" name="新建文件" />
          <Tool icon="folderOpenBar" name="打开" arrow={12} />
          <Tool icon="save" name="保存" />
          <Divider />
          <Tool icon="undo" name="撤销" arrow={12} />
          <More aria-label="更多">»</More>
        </Strip>
        <Strip $basis="549px">
          <Tool icon="paint" label="绘图" />
          <Tool icon="sigma" label="汇总计算" />
          <Tool icon="cloud" label="云检查" />
          <Tool icon="align" label="平齐板顶" off />
          <Tool icon="binoc" label="查找图元" off />
          <Tool icon="glasses" label="查看钢筋量" off />
          <Tool icon="batch" label="批量选择" off />
          <More aria-label="更多">»</More>
        </Strip>
        <Strip $grow={1}>
          <SelectBox $w={62} $framed $dim>
            <Icon name="plane2d" />
            <select aria-label="视图模式"><option>二维</option></select>
            <Caret />
          </SelectBox>
          <Tool icon="cube" label="俯视" off arrow={12} />
          <Tool icon="orbit" label="动态观察" off />
          <Tool icon="local3d" label="局部三维" off />
          <Divider />
          <Tool icon="full" label="全屏" off />
          <Tool icon="zoom" label="缩放" off arrow={12} />
          <Tool icon="pan" label="平移" off arrow={12} />
          <Tool icon="rotate" label="屏幕旋转" off arrow={7} />
          <Divider />
          <Tool icon="floors" label="选择楼层" off />
          <More aria-label="更多">»</More>
        </Strip>
      </ToolRow>

      <Work>
        <Navigator>
          <NavHead>
            模块导航栏
            <NavHeadTools>
              <svg width="9" height="10"><path d="M2.500 0v6M6.500 0v6M2 .5h5M0 6.500h9M4.500 7v3" stroke="#fff" fill="none" /></svg>
              <svg width="9" height="10"><path d="m.5 1.500 8 8m0-8-8 8" stroke="#fff" /></svg>
            </NavHeadTools>
          </NavHead>
          <NavStack>
            <NavButton>工程设置</NavButton>
            <NavButton>绘图输入</NavButton>
            <NavTools>
              <Icon name="expandAll" />
              <Icon name="collapseAll" />
            </NavTools>
            <ModuleTree />
            <NavButton>单构件输入</NavButton>
            <NavButton>报表预览</NavButton>
          </NavStack>
        </Navigator>

        <Main>
          <ComponentBar>
            <Tool icon="create" label="新建" arrow={7} />
            <Tool icon="cross" label="删除" />
            <Tool icon="copy" label="复制" />
            <Tool icon="rename" label="重命名" />
            <Divider />
            <label htmlFor="floor">楼层</label>
            <Divider $blank />
            <SelectBox $w={61}>
              <select id="floor"><option>首层</option></select>
              <Caret />
            </SelectBox>
            <Divider />
            <Tool icon="sort" label="排序" arrow={7} />
            <Tool icon="filter" label="过滤" arrow={7} />
            <Divider />
            <Tool icon="fromFloor" label="从其他楼层复制构件" />
            <Tool icon="toFloor" label="复制构件到其他楼层" />
            <Divider />
            <Tool label="查找" arrow={7} />
            <Divider />
            <Divider $blank />
            <Tool icon="up" label="上移" />
            <Tool icon="down" label="下移" off />
          </ComponentBar>

          <Panels>
            <Finder>
              <SearchRow>
                <SearchInput type="search" aria-label="搜索构件" placeholder="搜索构件..." />
                <SearchButton aria-label="搜索"><Icon name="lens" /></SearchButton>
              </SearchRow>
              <Tree>
                <li>
                  <Row>
                    <Twist aria-label="折叠"><Chevron open /></Twist>
                    <Stub />
                    <RootLabel><Icon name="gear" />构造柱</RootLabel>
                  </Row>
                  <ul>
                    {components.map((c, i) => (
                      <li key={c}>
                        <Row>
                          <Trunk $w={19} />
                          <Branch $last={i === components.length - 1} />
                          <Leaf $gap={7} $pad={4} $bg={c === 'GZ-10' ? '#316ac5' : undefined}>
                            <Icon name="cog" size={12} />
                            <Song>{c}</Song>
                          </Leaf>
                        </Row>
                      </li>
                    ))}
                  </ul>
                </li>
              </Tree>
            </Finder>

            <Editor>
              <Tabs><Tab>属性编辑</Tab></Tabs>
              <Pane>
                <Sheet>
                  <SheetBody>
                    <PropTable>
                      <colgroup>
                        <col width="21" />
                        <col width="191" />
                        <col />
                      </colgroup>
                      <thead>
                        <tr><th /><th>属性名称</th><th /></tr>
                      </thead>
                      <tbody>
                        {props.map((p) => (
                          <tr key={p.n}>
                            <IndexCell scope="row" $on={p.on}><Song>{p.n}</Song></IndexCell>
                            <NameCell $on={p.on} $color={p.tone ?? '#000'}>
                              <NameInner>
                                <PlusBox $show={p.group} aria-label="展开"><Plus /></PlusBox>
                                <Song>{p.name}</Song>
                              </NameInner>
                            </NameCell>
                            <ValueCell $on={p.on} $dim={p.n === '6'}>
                              <ValueInner>
                                {p.value && <Song>{p.value}</Song>}
                                {p.n === '6' && <><Song>5</Song><RebarMark /><Song>8</Song></>}
                              </ValueInner>
                            </ValueCell>
                          </tr>
                        ))}
                      </tbody>
                    </PropTable>
                  </SheetBody>
                  <ScrollBar>
                    <ScrollArrow aria-label="向上滚动"><svg width="9" height="9"><path d="m.5 6.500 4-4 4 4" fill="none" stroke="#505050" strokeWidth="1.700" /></svg></ScrollArrow>
                    <ScrollTrack />
                    <ScrollArrow aria-label="向下滚动"><Chevron open /></ScrollArrow>
                  </ScrollBar>
                </Sheet>
              </Pane>

              <SectionWindow>
                <SectionTitle>截面编辑</SectionTitle>
                <Client>
                  <SectionBar $h={30}>
                    <Grip />
                    {['布角筋', '布边筋', '特殊布筋', '对齐钢筋', '画箍筋'].map((t) => <SectionButton key={t}>{t}</SectionButton>)}
                    <Divider />
                    {['修改纵筋', '修改箍筋', '编辑弯钩', '端头伸缩', '删除'].map((t) => <SectionButton key={t}>{t}</SectionButton>)}
                  </SectionBar>
                  <BarBack>
                    <SectionBar $h={27} $fit>
                      <Grip />
                      <FieldName htmlFor="rebar">钢筋信息</FieldName>
                      <SelectBox $w={133} $framed $dim>
                        <select id="rebar"><option>C8@200</option></select>
                        <Caret />
                      </SelectBox>
                    </SectionBar>
                  </BarBack>
                  <Canvas><SectionDrawing /></Canvas>
                </Client>
                <SectionStatus>
                  <StatusCell $w={148}><Indent><Song>(X: 622 Y: 506)</Song></Indent></StatusCell>
                  <StatusCell $end>
                    <svg width="12" height="12" aria-hidden="true">
                      <path d="M8 1h2v2H8zM8 5h2v2H8zM8 9h2v2H8zM4 5h2v2H4zM4 9h2v2H4zM0 9h2v2H0z" fill="#b0b0b0" />
                    </svg>
                  </StatusCell>
                </SectionStatus>
              </SectionWindow>
            </Editor>
          </Panels>
        </Main>
      </Work>

      <StatusBar>
        <StatusCell $w={147} />
        <StatusCell $w={77}><StatusText><Song>层高:4.5m</Song></StatusText></StatusCell>
        <StatusCell $w={97}><StatusText><Song>底标高:-0.03m</Song></StatusText></StatusCell>
        <StatusCell $w={47}><StatusText><Song>0</Song></StatusText></StatusCell>
        <StatusCell />
      </StatusBar>

      <Taskbar>
        <Start aria-label="开始">
          <svg width="16" height="16">
            <defs>
              <linearGradient id="gold" x1="0" y1="0" x2="1" y2="1">
                <stop offset="0" stopColor="#fff0b0" />
                <stop offset=".6" stopColor="#f2c964" />
                <stop offset="1" stopColor="#b98414" />
              </linearGradient>
            </defs>
            <path d="M0 2.300 6.500 1.400v6.200H0zM7.500 1.200 16 0v7.600H7.500zM0 8.500h6.500v6.200L0 13.800zM7.500 8.500H16V16l-8.500-1.200z" fill="#fff" />
          </svg>
        </Start>
        <TaskSearch>
          <svg width="22" height="22"><circle cx="11" cy="11" r="9" fill="none" stroke="#fff" strokeWidth="2.500" /></svg>
          <input aria-label="搜索" placeholder="在这里输入你要搜索的内容" />
          <svg width="13" height="18"><path d="M4 1.500h5v10H4zM1.500 8v5.500h10V8M6.500 13.500v3M4 16.500h5" fill="none" stroke="#aaa" /></svg>
        </TaskSearch>
        <TaskButton aria-label="应用">
          <svg width="22" height="22" viewBox="0 0 22 22">
            <g fill="#e4e8ea" stroke="#00090d">
              <circle cx="6" cy="6" r="5.500" /><circle cx="16" cy="6" r="5.500" /><circle cx="16" cy="16" r="5.500" /><circle cx="6" cy="16" r="5.500" />
              <path d="M11 11C7 9 8 3 12 1M11 11c2-4 8-3 10 1M11 11c4 2 3 8-1 10M11 11c-2 4-8 3-10-1" fill="none" strokeWidth="1.300" />
            </g>
          </svg>
        </TaskButton>
        <TaskButton aria-label="浏览器">
          <svg width="20" height="20" viewBox="0 0 20 20"><path d="M19 2C9-1 1 4 1 11c0 5 4 8 9 8 4 0 8-3 8-7s-3-5-6-5-5 2-5 4 2 4 4 3M18 4C10 2 4 6 4 11c0 4 3 6 6 6 3 0 5-2 5-4h-4" fill="none" stroke="#cfd6da" strokeWidth="1.100" /></svg>
        </TaskButton>
        <TaskRule />
        <TaskButton aria-label="Edge">
          <svg width="22" height="22" viewBox="0 0 22 22"><path d="M1 10C2 3 6 1 11 1c7 0 10 5 10 11H8c0 4 7 6 11 3v5C13 23 4 21 4 14c0-4 2-6 5-7-1 1-1 2-1 2h7c0-6-9-6-14 1" fill="#0a78d4" /></svg>
        </TaskButton>
        <TaskButton aria-label="应用商店">
          <svg width="22" height="24" viewBox="0 0 22 24"><path d="M1 7 21 5v18L1 21z" fill="#fff" /><path d="M6 7c0-7 8-8 9-1" fill="none" stroke="#fff" strokeWidth="1.500" /><path d="M5 11l4-.4v3.600H5zM10 10.500l5-.5v4.200h-5zM5 15h4v3.700L5 18.300zM10 15h5v4.300l-5-.5z" fill="#00090d" /></svg>
        </TaskButton>
        <TaskButton aria-label="资源管理器">
          <svg width="22" height="20" viewBox="0 0 22 20"><path d="M0 1h8l1 2h12v15H0z" fill="#f8d775" /><path d="M0 5h22v13H0z" fill="#ffe694" /><path d="M4 10h14v9h-4v-5H8v5H4z" fill="#35a7dd" /></svg>
        </TaskButton>
        <TaskButton aria-label="360浏览器" $run>
          <svg width="24" height="24" viewBox="0 0 24 24"><circle cx="12" cy="12" r="10" fill="#5cc02c" stroke="#dff5d0" /><path d="M6 12h12c0-8-12-8-12 0s9 7 11 4" fill="none" stroke="#fff" strokeWidth="2.600" /><path d="M22 1C14 0 1 14 3 22c-4-8 8-24 19-21" fill="#8be04a" /></svg>
        </TaskButton>
        <TaskButton aria-label="钢筋算量" $on $run><Icon name="app" size={24} /></TaskButton>
        <TaskButton aria-label="便笺" $run>
          <svg width="24" height="24" viewBox="0 0 24 24"><rect x="1" y="1" width="22" height="22" rx="2" fill="#f7a31c" stroke="#ffd27a" strokeWidth="1.500" /><path d="M3 6 17 4l2 14-7 3H5z" fill="#fff7dc" /><path d="m6 10 8-1M6 13l6-1M7 16l4-1" stroke="#888" /><path d="m21 2-8 12-1 4 3-3 7-11z" fill="#7d3a14" /></svg>
        </TaskButton>

        <Tray>
          <Readout $w={70}>40%<br />CPU使用</Readout>
          <TrayIcon w={12} d="m0 12 6-6 6 6" />
          <svg width="16" height="16"><rect width="16" height="16" fill="#2f3a34" /><path d="M1 8c4-6 10-5 14 0-4 5-10 5-14 0" fill="#76b900" /><path d="M4 8c2-3 5-3 7 0-2 2-4 2-5 0" fill="none" stroke="#1c2a10" /></svg>
          <svg width="18" height="18" aria-hidden="true"><path d="M5 5.500h10.500v8H5zM16.500 7v5M1.500 2v3M4.500 2v3M0 5.500h6M1.500 6v2h3V6M3 8v3.500h2" fill="none" stroke="#fff" /><path d="M7 7h7v5H7z" fill="#fff" /></svg>
          <TrayIcon w={15} d="M2 15C2 8 7 4 14 4M5 15c0-5 3-8 9-8M8 15c0-3 2-5 6-5M11 15c0-1 1-2 3-2" />
          <TrayIcon d="M1 7h3l4-4v12l-4-4H1zM10.500 6c1.500 2 1.500 4 0 6M12.500 4c3 3 3 7 0 10" />
          <InputMode>中</InputMode>
          <Logo size={16} />
          <Readout $w={78}>14:32<br />2017/7/19</Readout>
          <svg width="25" height="26" viewBox="0 0 25 26"><path d="M0 1h16v12H9l-3 4v-4H0z" fill="#fff" /><path d="M3 4h10M3 7h10M3 10h7" stroke="#00090d" /><circle cx="16" cy="17" r="8" fill="#2b3236" stroke="#777" /><text x="13" y="21" fill="#fff" fontSize="11" fontWeight="700">2</text></svg>
          <ShowDesktop aria-label="显示桌面" />
        </Tray>
      </Taskbar>

      <ImeBar>
        <ImeLogo><Logo size={27} /></ImeLogo>
        <svg width="15" height="16"><path d="M1.500 4.500h12v6h-12zM7.500 1v15" fill="none" stroke="currentColor" strokeWidth="2" /></svg>
        <svg width="16" height="16"><circle cx="4" cy="5" r="2" fill="none" stroke="currentColor" strokeWidth="1.500" /><path d="M9 8h4c0 3-1 5-3 6" fill="currentColor" /></svg>
        <svg width="16" height="18"><rect x="5" y="1" width="6" height="10" rx="3" fill="currentColor" /><path d="M2.500 7c0 8 11 8 11 0M8 13v3M5 16h6" fill="none" stroke="currentColor" strokeWidth="1.500" /></svg>
        <svg width="16" height="14"><rect x="1" y="1.500" width="14" height="11" fill="none" stroke="currentColor" strokeWidth="1.500" /><path d="M3 4.500h10M3 7h10" stroke="currentColor" strokeWidth="1.500" strokeDasharray="2 1" /><path d="M4 10h8" stroke="currentColor" strokeWidth="1.500" /></svg>
        <svg width="18" height="18"><circle cx="6" cy="4" r="3.500" fill="#b8c4d4" /><path d="M0 14c0-8 12-8 12 0z" fill="#b8c4d4" /><text x="7" y="17" fontSize="8" fontWeight="700" fill="#8a9ab0">16</text></svg>
        <svg width="16" height="16"><path d="M5 1c1 2 5 2 6 0l5 3-2 4-2-1v8H4V7L2 8 0 4z" fill="currentColor" /></svg>
        <svg width="16" height="16"><path d="m2 14 7-7" stroke="currentColor" strokeWidth="3" /><path d="M14 2c-3-2-8 1-6 5 2 3 6 2 8-1l-3 1-2-2z" fill="currentColor" /></svg>
      </ImeBar>

      <Ball>69</Ball>
    </Page>
  );
}
